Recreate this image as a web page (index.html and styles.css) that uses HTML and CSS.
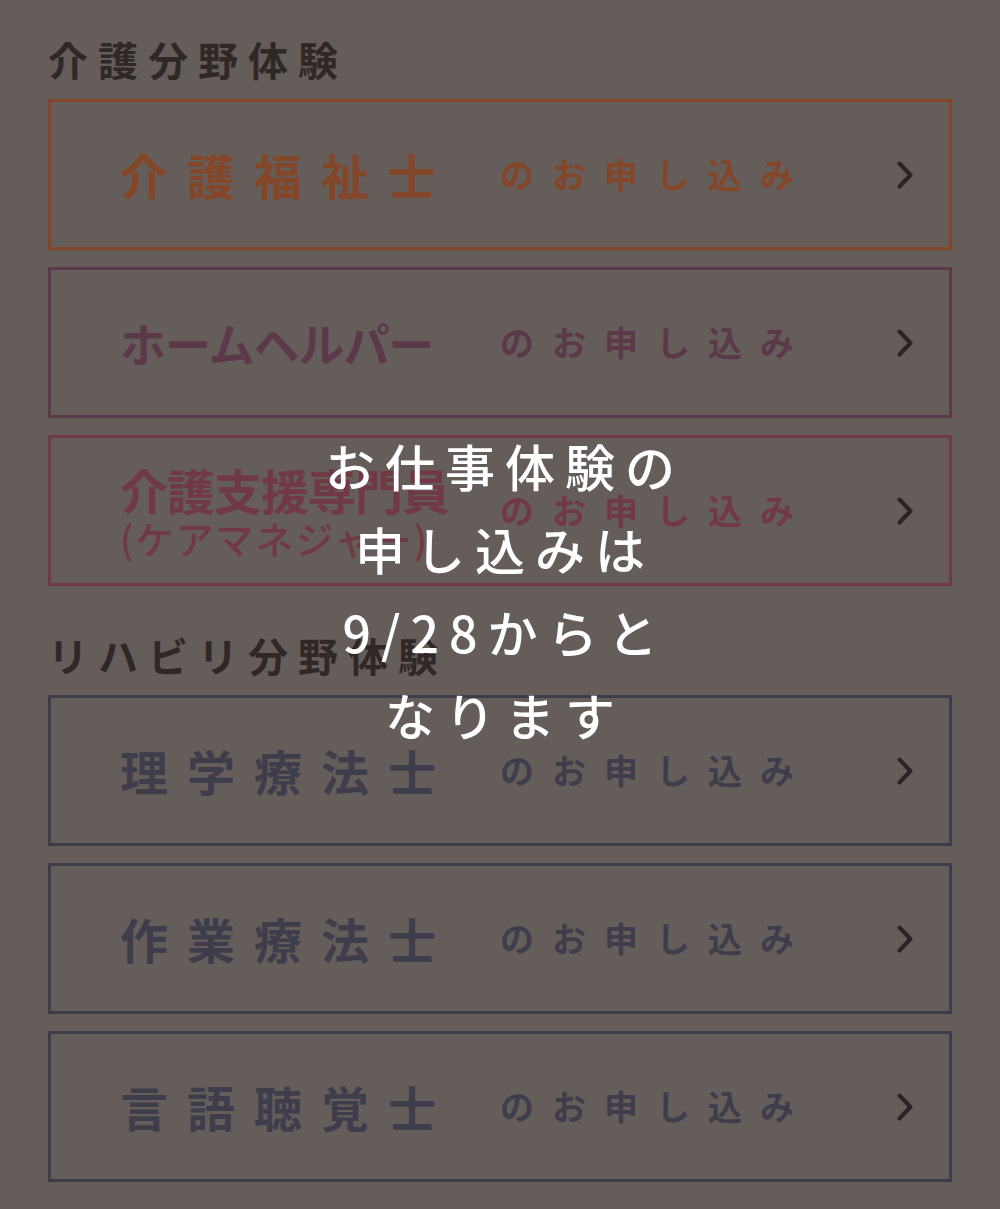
FILE: index.html
```html
<!DOCTYPE html>
<html lang="ja">
<head>
    <meta charset="UTF-8">
    <meta name="viewport" content="width=device-width, initial-scale=1.0">
    <title>お仕事体験</title>
    <link rel="stylesheet" href="styles.css">
</head>
<body>
    <main class="page">
        <section class="field">
            <h2 class="field-title">介護分野体験</h2>
            <ul class="entry-list">
                <li>
                    <a href="#" class="entry entry-orange">
                        <span class="entry-name entry-name-wide">介護福祉士</span>
                        <span class="entry-apply">のお申し込み</span>
                        <svg class="entry-arrow" viewBox="0 0 16 28" width="16" height="28"><polyline points="2.5,2.5 13.5,14 2.5,25.5"/></svg>
                    </a>
                </li>
                <li>
                    <a href="#" class="entry entry-purple">
                        <span class="entry-name entry-name-kana">ホームヘルパー</span>
                        <span class="entry-apply">のお申し込み</span>
                        <svg class="entry-arrow" viewBox="0 0 16 28" width="16" height="28"><polyline points="2.5,2.5 13.5,14 2.5,25.5"/></svg>
                    </a>
                </li>
                <li>
                    <a href="#" class="entry entry-red">
                        <span class="entry-name entry-name-long">介護支援専門員<small class="entry-sub">(ケアマネジャー)</small></span>
                        <span class="entry-apply">のお申し込み</span>
                        <svg class="entry-arrow" viewBox="0 0 16 28" width="16" height="28"><polyline points="2.5,2.5 13.5,14 2.5,25.5"/></svg>
                    </a>
                </li>
            </ul>
        </section>

        <section class="field">
            <h2 class="field-title">リハビリ分野体験</h2>
            <ul class="entry-list">
                <li>
                    <a href="#" class="entry entry-navy">
                        <span class="entry-name entry-name-wide">理学療法士</span>
                        <span class="entry-apply">のお申し込み</span>
                        <svg class="entry-arrow" viewBox="0 0 16 28" width="16" height="28"><polyline points="2.5,2.5 13.5,14 2.5,25.5"/></svg>
                    </a>
                </li>
                <li>
                    <a href="#" class="entry entry-navy">
                        <span class="entry-name entry-name-wide">作業療法士</span>
                        <span class="entry-apply">のお申し込み</span>
                        <svg class="entry-arrow" viewBox="0 0 16 28" width="16" height="28"><polyline points="2.5,2.5 13.5,14 2.5,25.5"/></svg>
                    </a>
                </li>
                <li>
                    <a href="#" class="entry entry-navy">
                        <span class="entry-name entry-name-wide">言語聴覚士</span>
                        <span class="entry-apply">のお申し込み</span>
                        <svg class="entry-arrow" viewBox="0 0 16 28" width="16" height="28"><polyline points="2.5,2.5 13.5,14 2.5,25.5"/></svg>
                    </a>
                </li>
            </ul>
        </section>
    </main>

    <div class="notice">
        <p class="notice-text">お仕事体験の<br>申し込みは<br>9/28からと<br>なります</p>
    </div>
</body>
</html>
```

FILE: styles.css
```css
* {
    box-sizing: border-box;
}
body {
    margin: 0;
    background: #655d5a;
    font-family: "Noto Sans CJK JP", "Noto Sans", sans-serif;
    color: #2f2826;
}
.page {
    padding: 36px 48px 27px;
}
.field + .field {
    margin-top: 46px;
}
.field-title {
    margin: 0 0 17px;
    font-size: 40px;
    line-height: 46px;
    font-weight: 700;
    letter-spacing: 10px;
}
.entry-list {
    list-style: none;
    margin: 0;
    padding: 0;
    display: flex;
    flex-direction: column;
    gap: 17px;
}
.entry {
    display: grid;
    grid-template-columns: 380px 1fr auto;
    align-items: center;
    height: 151px;
    padding: 0 36px 0 69px;
    border: 3px solid currentColor;
    text-decoration: none;
}
.entry-orange {
    color: #834628;
}
.entry-purple {
    color: #5b3949;
}
.entry-red {
    color: #703945;
}
.entry-navy {
    color: #3f3d4c;
}
.entry-name {
    font-size: 48px;
    font-weight: 700;
    line-height: 1.2;
}
.entry-name-wide {
    letter-spacing: 19px;
}
.entry-name-kana {
    font-size: 46px;
    letter-spacing: -1px;
}
.entry-name-long {
    letter-spacing: -1px;
    line-height: 1.15;
}
.entry-sub {
    display: block;
    font-size: 38px;
    font-weight: 500;
    line-height: 1.1;
    letter-spacing: 2px;
}
.entry-apply {
    font-size: 34px;
    font-weight: 700;
    letter-spacing: 18px;
    line-height: 1.2;
}
.entry-arrow {
    display: block;
    fill: none;
    stroke: #2a2424;
    stroke-width: 4;
    stroke-linecap: round;
    stroke-linejoin: round;
}
.notice {
    position: fixed;
    inset: 0;
    display: flex;
    align-items: center;
    justify-content: center;
    padding-bottom: 30px;
}
.notice-text {
    margin: 0;
    padding-left: 10px;
    color: #fff;
    font-size: 50px;
    font-weight: 500;
    line-height: 83px;
    letter-spacing: 10px;
    text-align: center;
}
```
